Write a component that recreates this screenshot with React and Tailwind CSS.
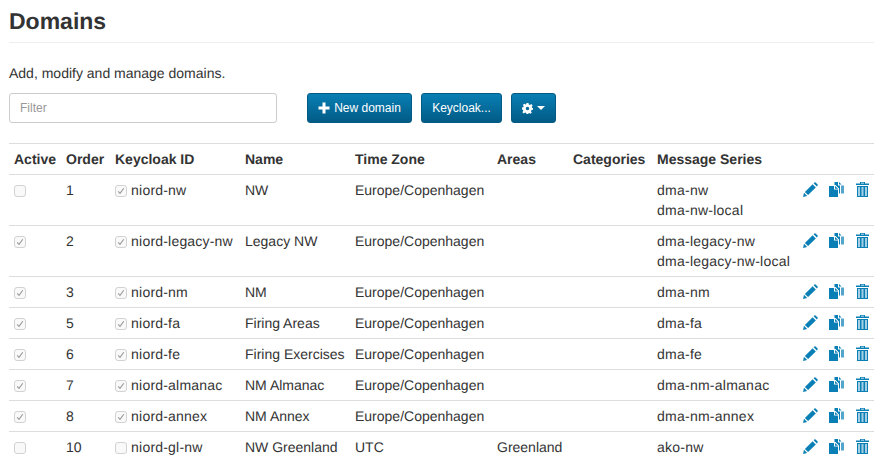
import React from 'react'

const rows = [
  { active: false, order: 1, kc: true, id: 'niord-nw', name: 'NW', tz: 'Europe/Copenhagen', areas: '', series: ['dma-nw', 'dma-nw-local'] },
  { active: true, order: 2, kc: true, id: 'niord-legacy-nw', name: 'Legacy NW', tz: 'Europe/Copenhagen', areas: '', series: ['dma-legacy-nw', 'dma-legacy-nw-local'] },
  { active: true, order: 3, kc: true, id: 'niord-nm', name: 'NM', tz: 'Europe/Copenhagen', areas: '', series: ['dma-nm'] },
  { active: true, order: 5, kc: true, id: 'niord-fa', name: 'Firing Areas', tz: 'Europe/Copenhagen', areas: '', series: ['dma-fa'] },
  { active: true, order: 6, kc: true, id: 'niord-fe', name: 'Firing Exercises', tz: 'Europe/Copenhagen', areas: '', series: ['dma-fe'] },
  { active: true, order: 7, kc: true, id: 'niord-almanac', name: 'NM Almanac', tz: 'Europe/Copenhagen', areas: '', series: ['dma-nm-almanac'] },
  { active: true, order: 8, kc: true, id: 'niord-annex', name: 'NM Annex', tz: 'Europe/Copenhagen', areas: '', series: ['dma-nm-annex'] },
  { active: false, order: 10, kc: false, id: 'niord-gl-nw', name: 'NW Greenland', tz: 'UTC', areas: 'Greenland', series: ['ako-nw'] },
]

function Check({ on }) {
  return (
    <span className="mt-[5px] inline-flex h-[12px] w-[12px] items-center justify-center rounded-[3px] border border-[#d2d2d2] bg-[#f9f9f9] align-top">
      {on && (
        <svg width="8" height="8" viewBox="0 0 8 8" fill="none" stroke="#9a9a9a" strokeWidth="1.1">
          <path d="M1.2 4.4 L3 6.4 L6.8 1.2" />
        </svg>
      )}
    </span>
  )
}

function Pencil() {
  return (
    <svg width="15" height="15" viewBox="0 0 15 15" fill="#0a7fb5">
      <path d="M0 15 L1 10.8 L4.2 14 Z" />
      <path d="M1.9 9.9 L9.6 2.2 L12.8 5.4 L5.1 13.1 Z" />
      <path d="M10.6 1.2 L11.4 0.4 Q12 0 12.6 0.4 L14.6 2.4 Q15 3 14.6 3.6 L13.8 4.4 Z" />
    </svg>
  )
}

function Copies() {
  return (
    <svg width="15" height="15" viewBox="0 0 15 15" fill="#0a7fb5">
      <path d="M0 4 H5 V7.5 H9 V15 H0 Z" />
      <path d="M6 4 L9 6.8 H6 Z" />
      <path d="M5.5 0 H9 V3.5 H11 V11.5 H10 V6.5 L6.5 3 H5.5 Z" />
      <path d="M10 0 L12.5 2.5 H10 Z" />
      <path d="M12 3.5 H15 V11.5 H12 Z" opacity="0.7" />
    </svg>
  )
}

function Trash() {
  return (
    <svg className="ml-px" width="13" height="15" viewBox="0 0 13 15">
      <path fill="#0a7fb5" fillRule="evenodd" d="M4 0 H9 V1.5 H13 V3 H0 V1.5 H4 Z M5 0.8 V1.5 H8 V0.8 Z" />
      <path fill="#0a7fb5" d="M1 4 H12 V15 H1 Z" />
      <path fill="#a5d0e4" d="M2 5 H4 V14 H2 Z M5.5 5 H7.5 V14 H5.5 Z M9 5 H11 V14 H9 Z" />
    </svg>
  )
}

function Btn({ children, className = '' }) {
  return (
    <button className={`flex h-[30px] items-center justify-center rounded-[3px] border border-[#035a82] bg-gradient-to-b from-[#0a7fb4] to-[#025b86] text-[12px] text-white ${className}`}>
      {children}
    </button>
  )
}

export default function App() {
  return (
    <div className="h-[467px] w-[890px] overflow-hidden bg-white pl-[9px] pr-[16px] text-[14px] leading-[20px] text-[#333] [font-family:'Liberation_Sans',Arial,sans-serif] [text-rendering:geometricPrecision]">
      <h1 className="h-[43px] border-b border-[#eee] pt-[6px] text-[23px] font-bold leading-[30px]">Domains</h1>
      <p className="mt-[21px] text-[14px] leading-[18px]">Add, modify and manage domains.</p>
      <div className="mt-[11px] flex items-center">
        <input
          placeholder="Filter"
          className="h-[30px] w-[268px] rounded-[3px] border border-[#ccc] px-[10px] text-[12px] placeholder:text-[#999]"
        />
        <Btn className="ml-[30px] w-[105px] gap-[4px]">
          <svg width="12" height="12" viewBox="0 0 12 12" fill="#fff"><path d="M4.5 0.5 H7.5 V4.5 H11.5 V7.5 H7.5 V11.5 H4.5 V7.5 H0.5 V4.5 H4.5 Z" /></svg>
          New domain
        </Btn>
        <Btn className="ml-[9px] w-[81px]">Keycloak...</Btn>
        <Btn className="ml-[9px] w-[45px] gap-[4px]">
          <svg width="11" height="11" viewBox="0 0 13 13" fill="#fff">
            <path fillRule="evenodd" d="M5.3 0 H7.7 L8 1.8 L9.4 2.4 L10.9 1.3 L12.6 3 L11.5 4.5 L12.1 5.9 L13 6 V8 L11.2 8.4 L10.6 9.7 L11.6 11.2 L10 12.8 L8.4 11.7 L7.7 12 L7.4 13 H5.3 L5 11.9 L3.6 11.3 L2.1 12.4 L0.5 10.8 L1.5 9.3 L1 8 L0 7.7 V5.4 L1.5 5 L2 3.8 L1 2.4 L2.7 0.8 L4.1 1.8 L5 1.4 Z M6.5 4.4 A2.1 2.1 0 1 0 6.5 8.6 A2.1 2.1 0 1 0 6.5 4.4 Z" />
          </svg>
          <span className="h-0 w-0 border-x-[4px] border-t-[4px] border-x-transparent border-t-white" />
        </Btn>
      </div>

      <table className="mt-[20px] w-[865px] table-fixed border-collapse border-t border-[#ddd]">
        <colgroup>
          <col className="w-[52px]" />
          <col className="w-[49px]" />
          <col className="w-[130px]" />
          <col className="w-[110px]" />
          <col className="w-[142px]" />
          <col className="w-[76px]" />
          <col className="w-[84px]" />
          <col className="w-[146px]" />
          <col />
        </colgroup>
        <thead>
          <tr className="h-[31px] border-b border-[#ddd] text-left">
            {['Active', 'Order', 'Keycloak ID', 'Name', 'Time Zone', 'Areas', 'Categories', 'Message Series', ''].map((h) => (
              <th key={h} className="whitespace-nowrap px-[5px] font-bold">{h}</th>
            ))}
          </tr>
        </thead>
        <tbody>
          {rows.map((r) => (
            <tr key={r.order} className="border-b border-[#ddd] align-top last:border-b-0">
              <td className="px-[5px] py-[5px]"><Check on={r.active} /></td>
              <td className="px-[5px] py-[5px]">{r.order}</td>
              <td className="whitespace-nowrap px-[5px] py-[5px] tracking-[0.2px]"><Check on={r.kc} /> {r.id}</td>
              <td className="whitespace-nowrap px-[5px] py-[5px]">{r.name}</td>
              <td className="px-[5px] py-[5px]">{r.tz}</td>
              <td className="px-[5px] py-[5px]">{r.areas}</td>
              <td className="px-[5px] py-[5px]"></td>
              <td className="whitespace-nowrap px-[5px] py-[5px] tracking-[0.25px]">
                {r.series.map((s) => <div key={s}>{s}</div>)}
              </td>
              <td className="py-[5px] pl-[5px]">
                <div className="flex h-[19px] items-center gap-[11px]">
                  <Pencil /><Copies /><Trash />
                </div>
              </td>
            </tr>
          ))}
        </tbody>
      </table>
    </div>
  )
}
